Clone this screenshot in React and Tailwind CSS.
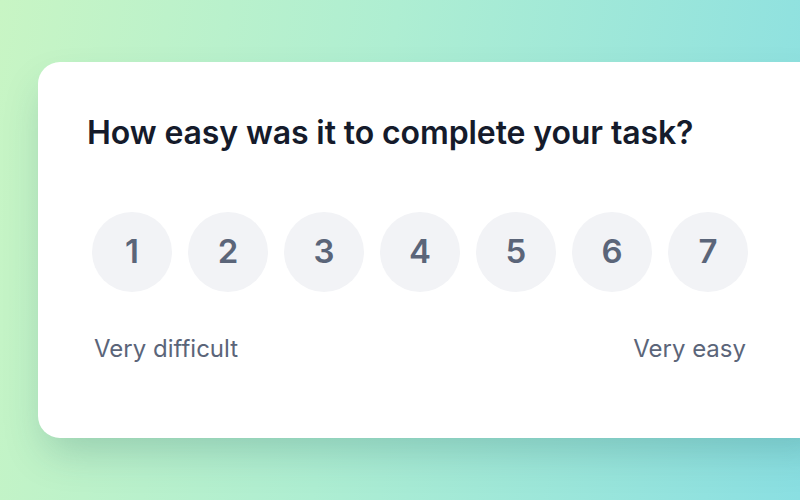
export default function App() {
  const nums = [1, 2, 3, 4, 5, 6, 7];
  return (
    <div
      className="w-[800px] h-[500px] overflow-hidden bg-[linear-gradient(100deg,#c8f5c4_0%,#aeeed2_45%,#8adfe2_100%)] pt-[62px] pl-[38px]"
      style={{ fontFamily: "Inter, 'Noto Sans', sans-serif" }}
    >
      <div className="w-[800px] h-[376px] bg-white rounded-[22px] shadow-[0_20px_40px_-8px_rgba(30,90,90,0.25)] pl-[49px] pt-[51px]">
        <h1 className="text-[32px] leading-[40px] font-semibold text-[#151b2b] tracking-[-0.1px]">
          How easy was it to complete your task?
        </h1>
        <div className="flex gap-4 mt-[59px] ml-[5px]">
          {nums.map((n) => (
            <div
              key={n}
              className="w-20 h-20 rounded-full bg-[#f2f3f6] flex items-center justify-center text-[33px] font-semibold text-[#5b6579]"
            >
              {n}
            </div>
          ))}
        </div>
        <div className="flex justify-between w-[652px] ml-[7px] mt-[41px] text-[24px] leading-[32px] text-[#5b6579]">
          <span>Very difficult</span>
          <span>Very easy</span>
        </div>
      </div>
    </div>
  );
}
